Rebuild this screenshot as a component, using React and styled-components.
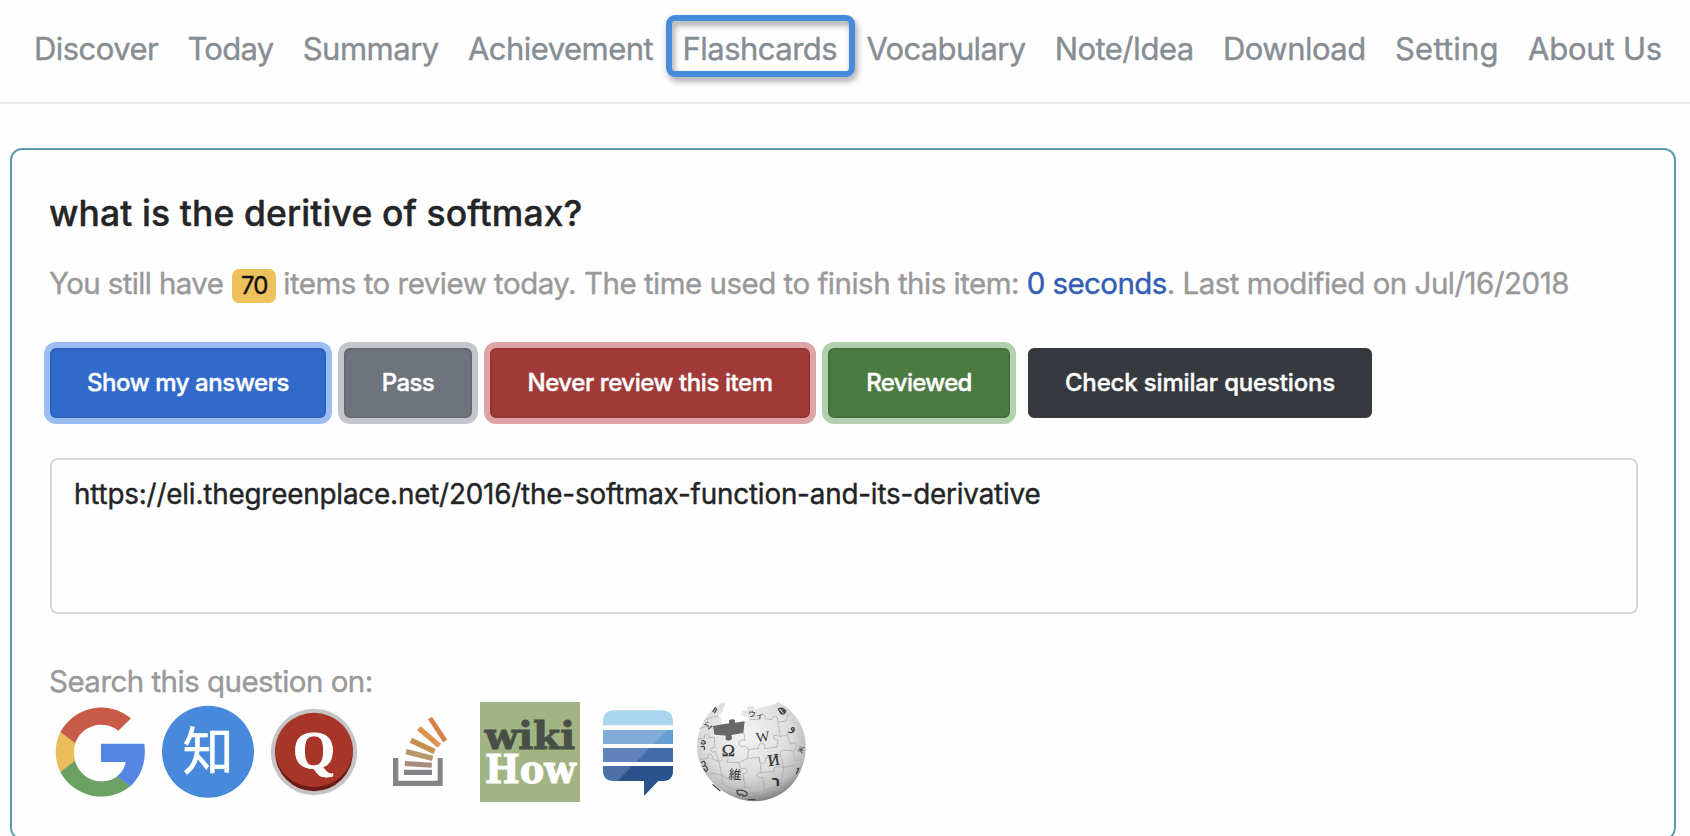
import React from 'react';
import styled, { createGlobalStyle } from 'styled-components';

const GlobalStyle = createGlobalStyle`
  *, *::before, *::after { box-sizing: border-box; }
  html, body { margin: 0; background: #fefefe; overflow: hidden; height: 100%; }
  body { font-family: Inter, "Liberation Sans", sans-serif; color: #212529; -webkit-text-stroke: 0.4px; }
`;

const NavBar = styled.nav`
  display: flex;
  justify-content: space-between;
  height: 104px;
  padding: 26px 28px 30px 34px;
  border-bottom: 2px solid #e7e9e9;
`;

const NavLink = styled.a`
  position: relative;
  font-size: 31px;
  line-height: 46px;
  letter-spacing: ${(p) => p.$track}px;
  color: #868e94;
  white-space: nowrap;
`;

const Highlight = styled.span`
  position: absolute;
  top: -11px;
  left: -16.5px;
  width: 189px;
  height: 62px;
  border: 6px solid #478bdc;
  border-radius: 9px;
  filter: drop-shadow(2px 4px 3px rgba(0, 0, 0, 0.38));
`;

const Card = styled.main`
  height: 692px;
  margin: 44px 14px 0 10px;
  padding: 42px 36px 0 38px;
  border: 2px solid #5b9bab;
  border-radius: 12px;
`;

const Title = styled.h1`
  margin: 0 0 0 -1px;
  font-size: 35.5px;
  font-weight: 500;
  line-height: 43px;
  letter-spacing: 0.1px;
  color: #242526;
`;

const Status = styled.div`
  display: flex;
  align-items: baseline;
  margin: 26px 0 0 -1px;
  height: 45px;
  font-size: 29.5px;
  line-height: 45px;
  letter-spacing: -0.5px;
  color: #999;
  white-space: pre;
`;

const Lead = styled.span`
  letter-spacing: -0.62px;
`;

const Badge = styled.span`
  width: 44px;
  height: 34px;
  margin: 0 7px 0 9px;
  border-radius: 7px;
  background: #eec15c;
  color: #111;
  font-size: 24px;
  line-height: 34px;
  letter-spacing: -0.8px;
  text-align: center;
`;

const Elapsed = styled.span`
  color: #335db5;
  letter-spacing: -0.6px;
`;

const Actions = styled.div`
  display: flex;
  gap: 18px;
  margin-top: 42px;
`;

const Button = styled.button`
  width: ${(p) => p.$width}px;
  height: 70px;
  padding: 0;
  border: 2px solid ${(p) => p.$edge};
  border-radius: 6px;
  background: ${(p) => p.$fill};
  box-shadow: ${(p) => (p.$ring ? `0 0 0 6px ${p.$ring}` : 'none')};
  color: #fff;
  font: 500 24px/36px Inter, "Liberation Sans", sans-serif;
  letter-spacing: ${(p) => p.$track}px;
  white-space: nowrap;
`;

const Answer = styled.div`
  height: 156px;
  margin-top: 40px;
  padding: 13px 22px;
  border: 2px solid #d8d8d8;
  border-radius: 8px;
  font-size: 27.8px;
  line-height: 42px;
  letter-spacing: -0.175px;
  color: #222426;
`;

const SearchLabel = styled.div`
  margin: 47px 0 0 -1px;
  font-size: 29.5px;
  line-height: 40px;
  letter-spacing: -0.53px;
  color: #999;
`;

const Engines = styled.div`
  display: flex;
  gap: 8px;
  margin-top: 1px;
  -webkit-text-stroke: 0;
`;

const Logo = styled.svg`
  display: block;
  flex: none;
  width: ${(p) => p.$width || 100}px;
  height: 100px;
  margin-left: ${(p) => p.$nudge || 0}px;
  overflow: visible;
`;

const links = [
  ['Discover', -0.55], ['Today', -0.7], ['Summary', -0.5], ['Achievement', -0.52],
  ['Flashcards', -0.52], ['Vocabulary', -0.66], ['Note/Idea', -0.58],
  ['Download', -0.5], ['Setting', 0.2], ['About Us', -0.2],
];

const actions = [
  { label: 'Show my answers', width: 276, fill: '#326acb', edge: '#2e62bd', ring: '#9bbdf3', track: -0.41 },
  { label: 'Pass', width: 128, fill: '#6d747b', edge: '#666b72', ring: '#c3c6ca', track: -0.6 },
  { label: 'Never review this item', width: 320, fill: '#a03a39', edge: '#943534', ring: '#dda4a6', track: -0.43 },
  { label: 'Reviewed', width: 182, fill: '#4c7a43', edge: '#466f3e', ring: '#b1d0ad', track: -0.65 },
  { label: 'Check similar questions', width: 344, fill: '#36393e', edge: '#36393e', track: -0.16 },
];

const GoogleLogo = () => (
  <Logo viewBox="150 186 300 300">
    <path fill="#ca5a48" d="M393 235A139 139 0 0 0 181 277L225 311A83 83 0 0 1 355 272Z" />
    <path fill="#eabd5b" d="M181 276A139 139 0 0 0 181 397L226 363A83 83 0 0 1 226 310Z" />
    <path fill="#6ba163" d="M181 396A139 139 0 0 0 391 439L353 409A83 83 0 0 1 225 362Z" />
    <path fill="#5686e4" d="M303 311H433C439 358 428 404 391 439L351 409C365 399 374 383 377 366H303Z" />
  </Logo>
);

const ZhihuLogo = () => (
  <Logo viewBox="474 186 300 300">
    <circle cx="624" cy="335" r="138" fill="#478adc" />
    <text x="624" y="389" textAnchor="middle" fontSize="152" fontFamily='"Noto Sans CJK SC", sans-serif' fill="#fff" stroke="#fff" strokeWidth="2">知</text>
  </Logo>
);

const QuoraLogo = () => (
  <Logo $nudge={-2} viewBox="792 186 300 300">
    <circle cx="942" cy="336" r="129.5" fill="#c5c3c4" />
    <circle cx="942" cy="337" r="116.5" fill="#6c1a17" />
    <ellipse cx="942" cy="330" rx="116.5" ry="111.5" fill="#a73628" />
    <text x="942" y="384" textAnchor="middle" fontSize="160" fontWeight="700" fontFamily='"Liberation Serif", serif' textLength="126" lengthAdjust="spacingAndGlyphs" fill="#fff" stroke="#fff" strokeWidth="3">Q</text>
  </Logo>
);

const StackOverflowLogo = () => (
  <Logo viewBox="6 66 300 300">
    <path fill="#838488" d="M69 234H85V302H203V234H218V318H69ZM102 269H186V285H102Z" />
    <path fill="#a58c7b" d="M105 243L186 248L185 263L104 258Z" />
    <path fill="#b7986b" d="M110 207L190 227L186 243L106 223Z" />
    <path fill="#c29051" d="M126 173L197 207L190 222L119 188Z" />
    <path fill="#dc9351" d="M152 139L213 191L203 203L141 151Z" />
    <path fill="#d5824a" d="M186 110L232 179L219 187L174 118Z" />
  </Logo>
);

const WikiHowLogo = () => (
  <Logo viewBox="330 66 300 300">
    <rect x="330" y="66" width="300" height="300" fill="#a2b484" />
    <text fontFamily='"DejaVu Serif", serif' fontWeight="700" strokeWidth="3">
      <tspan x="344" y="207" fontSize="113" textLength="271" lengthAdjust="spacingAndGlyphs" fill="#484f47" stroke="#484f47">wiki</tspan>
      <tspan x="345" y="309" fontSize="117" textLength="273" lengthAdjust="spacingAndGlyphs" fill="#fff" stroke="#fff">How</tspan>
    </text>
  </Logo>
);

const StackExchangeLogo = () => (
  <Logo viewBox="24 66 300 300">
    <path fill="#a9d5ef" d="M69 136V126Q69 91 104 91H244Q279 91 279 126V136Z" />
    <path fill="#7eacd7" d="M69 150H279V192H69Z" />
    <path fill="#659fd2" d="M263 150H279V192H221Z" />
    <path fill="#6283ba" d="M69 204H279V246H69Z" />
    <path fill="#426baa" d="M209 204H279V246H168Z" />
    <path fill="#4d6fa1" d="M69 258H279V271Q279 303 247 303H101Q69 303 69 271Z" />
    <path fill="#2d538d" d="M156 258H279V271Q279 303 247 303H235L192 348V303H112Z" />
  </Logo>
);

const WikipediaLogo = () => (
  <Logo $width={110} viewBox="348 66 330 300">
    <defs>
      <radialGradient id="globe" cx="0.45" cy="0.32" r="0.68">
        <stop offset="0" stopColor="#f4f4f4" />
        <stop offset="0.6" stopColor="#dddddd" />
        <stop offset="0.85" stopColor="#bcbcbc" />
        <stop offset="1" stopColor="#858585" />
      </radialGradient>
    </defs>
    <path
      fill="url(#globe)"
      d="M434 68C438 74 433 82 428 86C430 96 422 105 415 108L425 116L424 134L399 139L402 166L438 169Q431 181 446 182Q460 179 453 166L489 159L491 124L508 119L504 112L484 108L486 92L503 91Q497 78 508 77L523 80L522 89L550 81L587 73Q587 67 595 67L607 74Q623 80 636 98C690 151 688 236 648 298C608 359 531 379 464 352C397 325 350 263 351 199C352 149 376 101 416 75Q425 66 434 68Z"
    />
    <path fill="#686868" d="M399 138L428 133L448 130Q443 118 458 118Q469 119 464 128L494 124L490 159L454 165Q461 180 446 182Q432 180 438 167L403 164Z" />
    <g fill="none" stroke="#a5a5a5" strokeWidth="2">
      <path d="M353 178L375 174Q369 161 382 162Q393 166 386 174L403 171L405 203Q393 199 392 210Q395 220 407 214L416 244Q428 245 426 232Q438 225 445 237L440 246L475 248L483 267Q497 261 502 271Q500 281 489 281L495 322Q509 318 512 330L505 339L552 341" />
      <path d="M491 159L496 181Q482 177 476 189Q479 204 495 198L506 209L502 236L475 248M506 209L536 205Q533 190 548 190Q560 195 552 206L591 201L594 181Q579 179 581 167Q591 160 601 170L623 163L631 192L647 188Q653 208 640 213L645 242L664 239" />
      <path d="M508 119L542 117Q537 104 549 102Q560 106 556 116L574 119Q579 104 591 111L594 126L618 123L624 103M594 126L601 170M502 236L538 232Q535 248 548 252Q561 246 555 234L603 228Q597 214 609 210L640 213M603 228L611 262L645 256M538 232L544 278Q532 276 530 288Q536 298 548 291L553 329L603 317L611 262M361 239L385 234Q380 222 391 222Q402 226 396 236L416 244L426 286L446 298L495 297M379 283L402 280L426 286L430 315L463 329L495 322M544 278L583 273Q580 259 594 260L611 262M359 146L377 140L399 139M372 122L398 111L415 108" />
    </g>
    <g fill="#353535" fontFamily='"Liberation Serif", "Noto Sans CJK JP", serif' textAnchor="middle">
      <text x="445" y="228" fontSize="53" stroke="#353535">Ω</text>
      <text x="548" y="185" fontSize="43" transform="rotate(-8 548 170)">W</text>
      <text x="581" y="256" fontSize="49" transform="rotate(-9 581 240)" stroke="#353535">И</text>
      <text x="465" y="298" fontSize="39" transform="rotate(5 465 285)">維</text>
      <text x="528" y="113" fontSize="24" transform="rotate(10 528 103)">ウィ</text>
      <text x="588" y="318" fontSize="44" fontFamily='"DejaVu Sans", sans-serif' fontWeight="700">ר</text>
      <text x="640" y="153" fontSize="38" fontFamily='"DejaVu Sans", sans-serif' transform="rotate(20 640 143)">و</text>
      <text x="384" y="147" fontSize="31" transform="rotate(-42 384 136)">Σ</text>
      <text x="660" y="218" fontSize="31" transform="rotate(-70 660 208)">ж</text>
    </g>
    <g fill="none" stroke="#454545" strokeWidth="4" strokeLinecap="round">
      <path d="M595 87Q606 80 617 92Q615 106 603 101ZM602 86L614 99M609 85L616 97M598 92L608 102" />
      <path d="M366 182Q376 181 376 190Q368 196 364 188M364 200Q376 196 373 208" />
      <path d="M365 247Q377 239 375 255M369 259Q382 253 382 271M372 267L379 275" />
      <path d="M471 332Q486 327 500 337Q505 348 490 349Q486 337 479 346Q471 342 471 332M399 314L420 332M649 280Q662 262 652 266M404 98L410 87M399 94L406 83M505 359L525 359" />
    </g>
  </Logo>
);

export default function App() {
  return (
    <>
      <GlobalStyle />
      <NavBar>
        {links.map(([name, track]) => (
          <NavLink key={name} $track={track}>
            {name}
            {name === 'Flashcards' && <Highlight />}
          </NavLink>
        ))}
      </NavBar>
      <Card>
        <Title>what is the deritive of softmax?</Title>
        <Status>
          <Lead>You still have</Lead>
          <Badge>70</Badge>
          <span>{'items to review today. The time used to finish this item: '}</span>
          <Elapsed>0 seconds</Elapsed>
          <span>. Last modified on Jul/16/2018</span>
        </Status>
        <Actions>
          {actions.map((a) => (
            <Button key={a.label} $width={a.width} $fill={a.fill} $edge={a.edge} $ring={a.ring} $track={a.track}>
              {a.label}
            </Button>
          ))}
        </Actions>
        <Answer>https://eli.thegreenplace.net/2016/the-softmax-function-and-its-derivative</Answer>
        <SearchLabel>Search this question on:</SearchLabel>
        <Engines>
          <GoogleLogo />
          <ZhihuLogo />
          <QuoraLogo />
          <StackOverflowLogo />
          <WikiHowLogo />
          <StackExchangeLogo />
          <WikipediaLogo />
        </Engines>
      </Card>
    </>
  );
}
